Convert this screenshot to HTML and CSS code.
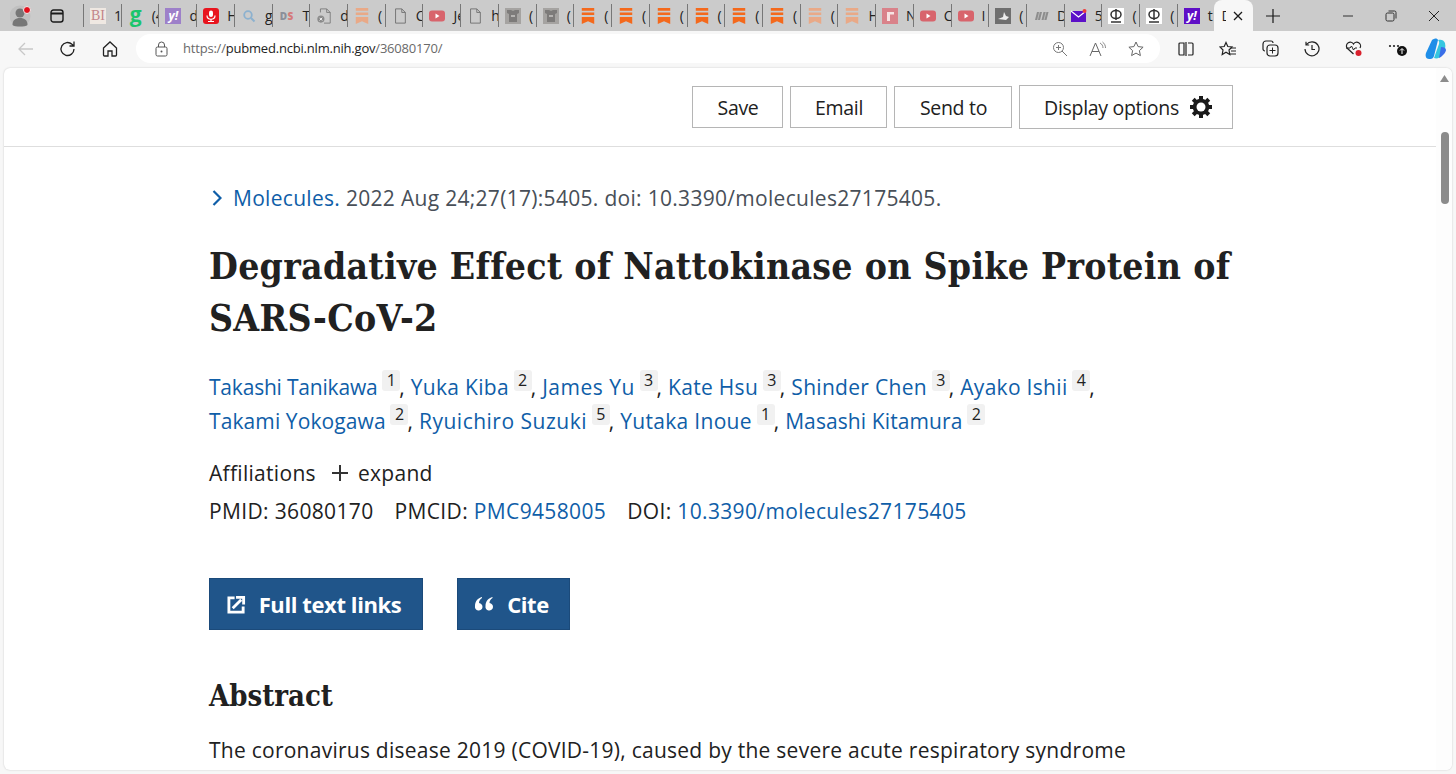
FILE: index.html
```html
<!DOCTYPE html>
<html lang="en">
<head>
<meta charset="utf-8">
<title>Degradative Effect of Nattokinase on Spike Protein of SARS-CoV-2 - PubMed</title>
<link rel="stylesheet" href="styles.css">
</head>
<body>
<svg class="defs" width="0" height="0" aria-hidden="true">
  <symbol id="ic-bookmark" viewBox="0 0 16 18"><path d="M1 0h14v3H1zM1 5h14v3H1zM1 10h14v8l-7-3-7 3z"/></symbol>
  <symbol id="ic-file" viewBox="0 0 16 18"><path d="M3 1h7l4 4v12H3zM10 1v4h4" fill="none" stroke="#6e6e6e" stroke-width="1"/></symbol>
  <symbol id="ic-yt" viewBox="0 0 16 12"><rect width="16" height="11" y=".5" rx="3" fill="#d8646c"/><path d="M6.500 3.500l4 2.500-4 2.500z" fill="#fff"/></symbol>
  <symbol id="ic-photo" viewBox="0 0 16 16"><rect width="16" height="16" fill="#a5a3a1"/><path d="M2 2h4l2 1 2-1h4v3l-2 1v8H4V6L2 5z" fill="#7d7b7a"/><path d="M6 7h4v2H6z" fill="#b5b3b1"/></symbol>
  <symbol id="ic-phi" viewBox="0 0 16 16"><rect width="16" height="16" fill="#fff"/><ellipse cx="8" cy="6.500" rx="5" ry="4" fill="none" stroke="#333" stroke-width="1.500"/><path d="M8 1v11M3 14h10" stroke="#333" stroke-width="1.500"/></symbol>
</svg>

<div class="tabstrip">
  <div class="strip-start">
    <svg class="avatar" width="24" height="26" viewBox="0 0 24 26"><circle cx="10" cy="13" r="10.500" fill="#c0c0c0"/><circle cx="10" cy="10" r="4.500" fill="#777"/><path d="M2.500 22c0-5 3-7 7.500-7s7.500 2 7.500 7c-2 2-13 2-15 0z" fill="#777"/><circle cx="17" cy="7" r="3.500" fill="#e3101c" stroke="#eee" stroke-width="1"/></svg>
    <svg class="tab-actions" width="14" height="14" viewBox="0 0 14 14"><rect x="1" y="1" width="12" height="12" rx="2.500" fill="none" stroke="#1a1a1a" stroke-width="1.400"/><path d="M1 4.500h12" stroke="#1a1a1a" stroke-width="2"/></svg>
  </div>
  <div class="tabs">
    <div class="tab"><span class="fav fav-bi">BI</span><span class="tt">1</span></div>
    <div class="tab"><span class="fav fav-g">g</span><span class="tt">(4</span></div>
    <div class="tab"><span class="fav fav-y pale">y!</span><span class="tt">d</span></div>
    <div class="tab"><svg class="fav" viewBox="0 0 16 16"><rect width="16" height="16" rx="3" fill="#e8141e"/><rect x="6" y="2.500" width="4" height="6.500" rx="2" fill="#fff"/><path d="M4 7.500c0 5 8 5 8 0M8 11v2M5 13.500h6" stroke="#fff" stroke-width="1.200" fill="none"/></svg><span class="tt">H</span></div>
    <div class="tab"><svg class="fav" viewBox="0 0 16 16"><circle cx="7" cy="7" r="3.800" fill="none" stroke="#8cb1cf" stroke-width="1.800"/><path d="M10 10l3.500 3.500" stroke="#8cb1cf" stroke-width="2"/></svg><span class="tt">g</span></div>
    <div class="tab"><span class="fav fav-ds"><b class="d">D</b><b class="s">S</b></span><span class="tt">T</span></div>
    <div class="tab"><svg class="fav" viewBox="0 0 16 18"><path d="M4 5V1h7l4 4v12H8M11 1v4h4" fill="none" stroke="#7a7a7a"/><circle cx="4.500" cy="12.500" r="4" fill="#8a8a8a"/><path d="M3 11l3 3m0-3l-3 3" stroke="#fff"/></svg><span class="tt">d</span></div>
    <div class="tab"><svg class="fav c-pale" viewBox="0 0 16 18"><use href="#ic-bookmark"/></svg><span class="tt">(</span></div>
    <div class="tab"><svg class="fav" viewBox="0 0 16 18"><use href="#ic-file"/></svg><span class="tt">C</span></div>
    <div class="tab"><svg class="fav" viewBox="0 0 16 12"><use href="#ic-yt"/></svg><span class="tt">Je</span></div>
    <div class="tab"><svg class="fav" viewBox="0 0 16 18"><use href="#ic-file"/></svg><span class="tt">h</span></div>
    <div class="tab"><svg class="fav" viewBox="0 0 16 16"><use href="#ic-photo"/></svg><span class="tt">(</span></div>
    <div class="tab"><svg class="fav" viewBox="0 0 16 16"><use href="#ic-photo"/></svg><span class="tt">(</span></div>
    <div class="tab"><svg class="fav c-orange" viewBox="0 0 16 18"><use href="#ic-bookmark"/></svg><span class="tt">(</span></div>
    <div class="tab"><svg class="fav c-orange" viewBox="0 0 16 18"><use href="#ic-bookmark"/></svg><span class="tt">(</span></div>
    <div class="tab"><svg class="fav c-orange" viewBox="0 0 16 18"><use href="#ic-bookmark"/></svg><span class="tt">(</span></div>
    <div class="tab"><svg class="fav c-orange" viewBox="0 0 16 18"><use href="#ic-bookmark"/></svg><span class="tt">(</span></div>
    <div class="tab"><svg class="fav c-orange" viewBox="0 0 16 18"><use href="#ic-bookmark"/></svg><span class="tt">(</span></div>
    <div class="tab"><svg class="fav c-orange" viewBox="0 0 16 18"><use href="#ic-bookmark"/></svg><span class="tt">(</span></div>
    <div class="tab"><svg class="fav c-pale" viewBox="0 0 16 18"><use href="#ic-bookmark"/></svg><span class="tt">(</span></div>
    <div class="tab"><svg class="fav c-pale" viewBox="0 0 16 18"><use href="#ic-bookmark"/></svg><span class="tt">H</span></div>
    <div class="tab"><svg class="fav" viewBox="0 0 16 16"><rect width="16" height="16" fill="#d9828a"/><path d="M5 13V4h7v2.500H8V13z" fill="#f7e3e3"/></svg><span class="tt">N</span></div>
    <div class="tab"><svg class="fav" viewBox="0 0 16 12"><use href="#ic-yt"/></svg><span class="tt">C</span></div>
    <div class="tab"><svg class="fav" viewBox="0 0 16 12"><use href="#ic-yt"/></svg><span class="tt">I</span></div>
    <div class="tab"><svg class="fav" viewBox="0 0 16 16"><rect width="16" height="16" fill="#6f6f6f"/><path d="M3 11l5-2 1-5 2 4 3 1-3 3z" fill="#eee"/></svg><span class="tt">(</span></div>
    <div class="tab"><svg class="fav" viewBox="0 0 16 16"><path d="M2 12l2-8h5L7 12zM8.500 12l2-8h5l-2 8z" fill="#8d8d8d"/><path d="M4.500 12l2-8M11 12l2-8" stroke="#ccc" stroke-width=".7"/></svg><span class="tt">D</span></div>
    <div class="tab"><svg class="fav" viewBox="0 0 16 16"><rect y="3" width="15" height="11" fill="#5c10c8"/><path d="M0 3l7.500 6L15 3" fill="none" stroke="#fff" stroke-width="1.200"/><circle cx="13.500" cy="3" r="2" fill="#ef3b3b"/></svg><span class="tt">5</span></div>
    <div class="tab"><svg class="fav" viewBox="0 0 16 16"><use href="#ic-phi"/></svg><span class="tt">(</span></div>
    <div class="tab"><svg class="fav" viewBox="0 0 16 16"><use href="#ic-phi"/></svg><span class="tt">(</span></div>
    <div class="tab"><span class="fav fav-y solid">y!</span><span class="tt">t</span></div>
  </div>
  <div class="tab-active"><span class="tt tt-clip">D</span><svg width="10" height="10" viewBox="0 0 10 10"><path d="M1 1l8 8M9 1L1 9" stroke="#1a1a1a" stroke-width="1.300"/></svg></div>
  <svg class="newtab" width="14" height="14" viewBox="0 0 14 14"><path d="M7 0v14M0 7h14" stroke="#1a1a1a" stroke-width="1.200"/></svg>
  <div class="winctl">
    <svg width="12" height="12" viewBox="0 0 12 12"><path d="M1 6h10" stroke="#333" stroke-width="1"/></svg>
    <svg width="12" height="12" viewBox="0 0 12 12"><rect x="1" y="3" width="8" height="8" rx="1.500" fill="none" stroke="#333"/><path d="M3.500 1h6a1.500 1.500 0 0 1 1.500 1.500v6" fill="none" stroke="#333"/></svg>
    <svg width="12" height="12" viewBox="0 0 12 12"><path d="M1 1l10 10M11 1L1 11" stroke="#222" stroke-width="1"/></svg>
  </div>
</div>

<div class="toolbar">
  <svg class="tb-back" width="18" height="16" viewBox="0 0 18 16"><path d="M8 2L2 8l6 6M2 8h14" fill="none" stroke="#c8c8c8" stroke-width="1.300"/></svg>
  <svg class="tb-ref" width="18" height="18" viewBox="0 0 18 18"><path d="M15 9a6.500 6.500 0 1 1-2-4.700L15 6M15 1.500V6h-4.500" fill="none" stroke="#222" stroke-width="1.300"/></svg>
  <svg class="tb-home" width="18" height="18" viewBox="0 0 18 18"><path d="M2.500 8L9 2l6.500 6v7a1 1 0 0 1-1 1H11v-5H7v5H3.500a1 1 0 0 1-1-1z" fill="none" stroke="#222" stroke-width="1.300"/></svg>
  <div class="addr">
    <svg class="lock" width="13" height="16" viewBox="0 0 13 16"><rect x="1" y="6" width="11" height="9" rx="1.500" fill="none" stroke="#555"/><path d="M3.500 6V4a3 3 0 0 1 6 0v2" fill="none" stroke="#555"/><circle cx="6.500" cy="10.500" r="1" fill="#555"/></svg>
    <span class="url"><span class="dim">https://</span>pubmed.ncbi.nlm.nih.gov<span class="dim">/36080170/</span></span>
    <div class="addr-icons">
      <svg width="16" height="16" viewBox="0 0 16 16"><circle cx="6.500" cy="6.500" r="5" fill="none" stroke="#777"/><path d="M10 10l5 5M4 6.500h5M6.500 4v5" stroke="#777"/></svg>
      <svg width="18" height="16" viewBox="0 0 18 16"><path d="M1 15L6.500 2 12 15M3 10.500h7" fill="none" stroke="#666"/><path d="M11 2c2 1 3 3 3 5M13.500 1c2 1.500 3 3.500 3 6" fill="none" stroke="#888"/></svg>
      <svg width="16" height="16" viewBox="0 0 16 16"><path d="M8 1l2.100 4.600 5 .6-3.700 3.400 1 5L8 12.100 3.600 14.600l1-5L.9 6.200l5-.6z" fill="none" stroke="#666"/></svg>
    </div>
  </div>
  <div class="tb-right">
    <svg width="16" height="14" viewBox="0 0 16 14"><path d="M6 1H2a1 1 0 0 0-1 1v10a1 1 0 0 0 1 1h4zM10 1h4a1 1 0 0 1 1 1v10a1 1 0 0 1-1 1h-4M8 0v14" fill="none" stroke="#222" stroke-width="1.200"/></svg>
    <svg width="18" height="16" viewBox="0 0 18 16"><path d="M7 1.500l1.800 4 4.200.5-3 3 .8 4.500L7 11.300 3.200 13.500 4 9 1 6l4.200-.5z" fill="none" stroke="#222" stroke-width="1.200"/><path d="M12 7h5M12 10h5M11 13h6" stroke="#222"/></svg>
    <svg width="17" height="17" viewBox="0 0 17 17"><path d="M3 11a2 2 0 0 1-2-2V4a3 3 0 0 1 3-3h5a2 2 0 0 1 2 2" fill="none" stroke="#222" stroke-width="1.200"/><rect x="5" y="5" width="11" height="11" rx="3" fill="none" stroke="#222" stroke-width="1.200"/><path d="M10.500 7.500v6M7.500 10.500h6" stroke="#222"/></svg>
    <svg width="16" height="16" viewBox="0 0 16 16"><path d="M2.500 3.500A7 7 0 1 1 1 8M2 .8v3.200h3.200M8 4v4.500h3" fill="none" stroke="#222" stroke-width="1.200"/></svg>
    <svg width="18" height="17" viewBox="0 0 18 17"><path d="M8.500 14L2 8a3.600 3.600 0 0 1 6.500-4A3.600 3.600 0 0 1 15 8" fill="none" stroke="#222" stroke-width="1.200"/><path d="M1 8h4l1.500-2 2 4L10 8h2" fill="none" stroke="#222"/><circle cx="13.500" cy="13" r="3" fill="#d9202c"/></svg>
    <span class="more"><svg width="20" height="18" viewBox="0 0 20 18"><circle cx="2" cy="6" r="1.100" fill="#222"/><circle cx="6" cy="6" r="1.100" fill="#222"/><circle cx="10" cy="6" r="1.100" fill="#222"/><circle cx="14" cy="11" r="5" fill="#111"/><path d="M14 14v-5M12 10.500l2-2 2 2" stroke="#fff" fill="none"/></svg></span>
    <svg class="copilot" width="24" height="24" viewBox="0 0 24 24"><path d="M8 3c3-2 5-2 6 0L10 19c-1 3-3 3-5 3-3 0-4-3-3-6z" fill="#1f8ee8"/><path d="M14 3c3-1 6 0 7 3 1 4 0 8-3 12-2 3-5 4-8 3l5-14c.5-2 0-3-1-4z" fill="#35c6e0"/><path d="M17 10c3 0 5 1 5 3s-3 6-7 8z" fill="#3a6ee8"/></svg>
  </div>
</div>

<div class="window">
  <div class="viewport">
    <div class="actions">
      <button class="act">Save</button>
      <button class="act act-email">Email</button>
      <button class="act act-send">Send to</button>
      <button class="act act-display">Display options
        <svg width="24" height="24" viewBox="0 0 24 24"><g fill="#1a1a1a"><circle cx="12" cy="12" r="8.300"/><rect x="10" y="1" width="4" height="22"/><rect x="10" y="1" width="4" height="22" transform="rotate(45 12 12)"/><rect x="10" y="1" width="4" height="22" transform="rotate(90 12 12)"/><rect x="10" y="1" width="4" height="22" transform="rotate(135 12 12)"/></g><circle cx="12" cy="12" r="4.500" fill="#fff"/></svg>
      </button>
    </div>
    <main class="article">
      <div class="cit">
        <svg class="chev" width="10" height="16" viewBox="0 0 10 16"><path d="M1.500 1l7 7-7 7" fill="none" stroke="#0f5ea8" stroke-width="2.200"/></svg>
        <span><a class="lnk">Molecules.</a> 2022 Aug 24;27(17):5405. doi: 10.3390/molecules27175405.</span>
      </div>
      <h1 class="title">Degradative Effect of Nattokinase on Spike Protein of SARS-CoV-2</h1>
      <div class="authors">
        <a class="lnk tight-a">Takashi Tanikawa</a> <sup class="af">1</sup>, <a class="lnk">Yuka Kiba</a> <sup class="af">2</sup>, <a class="lnk wide">James Yu</a> <sup class="af">3</sup>, <a class="lnk">Kate Hsu</a> <sup class="af">3</sup>, <a class="lnk">Shinder Chen</a> <sup class="af">3</sup>, <a class="lnk">Ayako Ishii</a> <sup class="af">4</sup>,<br>
        <a class="lnk tight-b">Takami Yokogawa</a> <sup class="af">2</sup>, <a class="lnk wide">Ryuichiro Suzuki</a> <sup class="af">5</sup>, <a class="lnk">Yutaka Inoue</a> <sup class="af">1</sup>, <a class="lnk tight-b">Masashi Kitamura</a> <sup class="af">2</sup>
      </div>
      <div class="affil">Affiliations <svg class="plus" width="16" height="16" viewBox="0 0 16 16"><path d="M8 0v16M0 8h16" stroke="#333" stroke-width="2"/></svg> expand</div>
      <div class="ids"><span>PMID: 36080170</span><span>PMCID: <a class="lnk">PMC9458005</a></span><span>DOI: <a class="lnk">10.3390/molecules27175405</a></span></div>
      <div class="cta">
        <a class="btn btn-full"><svg width="19" height="19" viewBox="0 0 20 20"><path d="M8 3H2v15h15v-6" fill="none" stroke="#fff" stroke-width="3"/><path d="M6 14L15 5M9.500 2.500h8V10" fill="none" stroke="#fff" stroke-width="3"/></svg>Full text links</a>
        <a class="btn btn-cite"><svg width="20" height="16" viewBox="0 0 20 16"><path d="M8 1C4 2 1 5 1 10a3.800 3.800 0 1 0 4-3c0-2 1-4 3-5zM18.500 1c-4 1-7 4-7 9a3.800 3.800 0 1 0 4-3c0-2 1-4 3-5z" fill="#fff"/></svg>Cite</a>
      </div>
      <h2 class="abs">Abstract</h2>
      <p class="body">The coronavirus disease 2019 (COVID-19), caused by the severe acute respiratory syndrome</p>
    </main>
  </div>
  <div class="scrollbar">
    <svg width="9" height="7" viewBox="0 0 9 7"><path d="M4.500 0L9 7H0z" fill="#8c8c8c"/></svg>
    <div class="thumb"></div>
  </div>
</div>
</body>
</html>
```
FILE: styles.css
```css
* { box-sizing: border-box; }
html, body { margin: 0; padding: 0; height: 100%; overflow: hidden; }
body {
  width: 1456px;
  height: 774px;
  background: #f7f7f7;
  font-family: "Open Sans", "Noto Sans", sans-serif;
  color: #212121;
  display: flex;
  flex-direction: column;
}
.defs { position: absolute; }

/* tab strip */
.tabstrip {
  height: 31px;
  flex: none;
  background: #cbcbcb;
  display: flex;
  align-items: center;
}
.strip-start {
  width: 83px;
  flex: none;
  display: flex;
  align-items: center;
  padding-left: 10px;
  gap: 16px;
}
.tabs { display: grid; grid-template-columns: repeat(30, 37.72px); height: 31px; flex: none; }
.tab {
  display: flex;
  align-items: center;
  gap: 8px;
  padding-left: 6px;
  overflow: hidden;
  border-left: 1px solid #777;
  height: 23px;
  margin-top: 4px;
  white-space: nowrap;
}
.fav { width: 16px; height: 16px; flex: none; display: block; }
.tt { font: 14px/1 "Open Sans", sans-serif; color: #222; flex: none; }
.tt-clip { width: 4px; overflow: hidden; }
.fav-bi {
  background: #efe8e2;
  color: #c2848a;
  font: 14px/16px "Liberation Serif", serif;
  text-align: center;
}
.fav-g { color: #1cc56c; font: 700 21px/13px "Open Sans", sans-serif; text-align: center; }
.fav-y { color: #fff; font: italic 700 12px/16px "Open Sans", sans-serif; text-align: center; }
.pale { background: #9d80c9; }
.solid { background: #5f0fc6; }
.fav-ds { font: 700 10px/16px "Open Sans", sans-serif; text-align: center; letter-spacing: .2px; }
.fav-ds .d { color: #8a8f99; }
.fav-ds .s { color: #d47a7a; }
.c-orange { fill: #f4691c; }
.c-pale { fill: #e9a987; }
.tab-active {
  width: 39px;
  height: 31px;
  flex: none;
  margin-left: -1px;
  background: #f7f7f7;
  border-radius: 8px 8px 0 0;
  display: flex;
  align-items: center;
  gap: 7px;
  padding-left: 8px;
  overflow: hidden;
}
.newtab { margin-left: 13px; flex: none; }
.winctl {
  margin-left: auto;
  display: flex;
  gap: 31px;
  padding-right: 16px;
  align-items: center;
}

/* toolbar */
.toolbar {
  height: 35px;
  flex: none;
  display: flex;
  align-items: center;
  background: #f7f7f7;
  padding-left: 17px;
}
.tb-back, .tb-ref, .tb-home { flex: none; }
.tb-ref { margin-left: 24px; }
.tb-home { margin-left: 24px; }
.addr {
  margin-left: 17px;
  width: 1024px;
  height: 29px;
  flex: none;
  background: #fff;
  border-radius: 15px;
  display: flex;
  align-items: center;
  padding-left: 19px;
}
.url { margin-left: 15px; padding-bottom: 2px; font-size: 13px; color: #222; letter-spacing: -.2px; white-space: nowrap; }
.dim { color: #6a6a6a; }
.addr-icons { margin-left: auto; display: flex; align-items: center; gap: 21px; padding-right: 16px; }
.tb-right { display: flex; align-items: center; gap: 25px; margin-left: 18px; }
.more { display: block; height: 18px; }
.copilot { margin-left: -9px; }

/* page */
.window {
  flex: 1;
  min-height: 0;
  margin: 2px 4px 4px 4px;
  background: #fff;
  border-radius: 6px;
  box-shadow: 0 0 2px rgba(0,0,0,.2);
  display: flex;
  overflow: hidden;
}
.viewport { flex: 1; min-width: 0; overflow: hidden; }
.scrollbar {
  width: 16px;
  flex: none;
  background: #fdfdfd;
  display: flex;
  flex-direction: column;
  align-items: center;
  padding: 7px 0 0 1px;
}
.thumb { width: 8px; height: 72px; margin-top: 50px; border-radius: 4px; background: #8b8b8b; }

.actions {
  height: 79px;
  border-bottom: 1px solid #dedede;
  display: flex;
  align-items: center;
  padding-left: 688px;
  gap: 7px;
}
.act {
  height: 42px;
  width: 91px;
  padding: 0 0 0 1px;
  border: 1px solid #b5b5b5;
  background: #fff;
  color: #212121;
  font: 19.500px "Open Sans", sans-serif;
  letter-spacing: -.3px;
}
.act-email { width: 97px; }
.act-send { width: 118px; }
.act-display {
  width: 214px;
  height: 44px;
  padding-left: 5px;
  display: flex;
  align-items: center;
  justify-content: center;
  gap: 10px;
}

.article { padding: 36px 0 0 205px; width: 1240px; }
.lnk { color: #0f5ea8; text-decoration: none; }
.tight-a { letter-spacing: -.2px; }
.tight-b { letter-spacing: .1px; }
.wide { letter-spacing: .5px; }
.cit {
  font-size: 21px;
  line-height: 30px;
  color: #484f58;
  letter-spacing: .3px;
  display: flex;
  align-items: center;
}
.chev { margin: 0 11px 0 3px; flex: none; }
.title {
  margin: 27px 0 0;
  font: 700 37px/52px "DejaVu Serif Condensed", "DejaVu Serif", serif;
  letter-spacing: .29px;
  color: #212121;
  width: 1040px;
}
.authors { margin-top: 26px; font-size: 21px; line-height: 34px; letter-spacing: .3px; white-space: nowrap; }
.af {
  display: inline-block;
  vertical-align: 9px;
  background: #f1f1f1;
  border-radius: 3px;
  min-width: 18px;
  height: 21px;
  margin: -4px -1px 0 -1px;
  font-size: 16px;
  line-height: 21px;
  letter-spacing: 0;
  text-align: center;
}
.affil { margin-top: 18px; font-size: 21px; line-height: 34px; letter-spacing: .3px; display: flex; align-items: center; }
.plus { margin: 0 10px 0 16px; }
.ids { margin-top: 4px; font-size: 21px; line-height: 34px; letter-spacing: .35px; display: flex; gap: 21px; }
.cta { margin-top: 50px; display: flex; gap: 34px; }
.btn {
  height: 52px;
  padding-right: 4px;
  background: #20558a;
  border: 1px solid #1b4a7a;
  color: #fff;
  font-weight: 700;
  font-size: 22px;
  letter-spacing: -.4px;
  display: flex;
  align-items: center;
  gap: 13px;
  justify-content: center;
}
.btn-full { width: 214px; }
.btn-cite { width: 113px; }
.abs { margin: 46px 0 0; font: 700 29px/40px "DejaVu Serif Condensed", "DejaVu Serif", serif; color: #212121; }
.body { margin: 19px 0 0; font-size: 21px; line-height: 30px; letter-spacing: .25px; white-space: nowrap; }
```
